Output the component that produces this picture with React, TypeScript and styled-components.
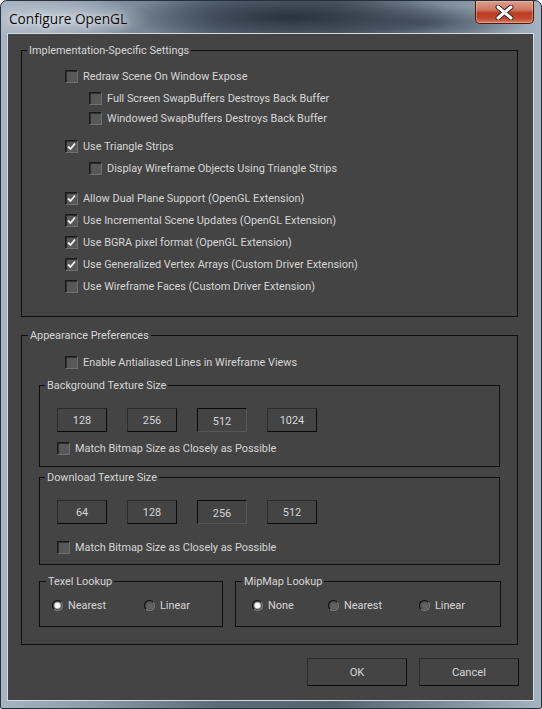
import React from "react";
import styled, { createGlobalStyle } from "styled-components";

const GlobalStyle = createGlobalStyle`
  html, body {
    margin: 0;
    padding: 0;
    background: #ffffff;
  }
  * {
    box-sizing: border-box;
  }
`;

const FONT = `Roboto, "Liberation Sans", Arial, sans-serif`;

const Window = styled.div`
  width: 542px;
  height: 709px;
  border: 1px solid #27313b;
  border-radius: 7px 7px 2px 2px;
  display: flex;
  flex-direction: column;
  background:
    radial-gradient(ellipse 90px 22px at 60px 18px, rgba(220, 228, 236, 0.55), rgba(220, 228, 236, 0) 100%),
    radial-gradient(ellipse 170px 26px at 290px 16px, rgba(38, 48, 60, 0.95), rgba(38, 48, 60, 0) 100%),
    radial-gradient(ellipse 110px 18px at 420px 22px, rgba(60, 72, 86, 0.8), rgba(60, 72, 86, 0) 100%),
    linear-gradient(90deg, #a7b4c1 0%, #8a98a6 18%, #5d6b79 40%, #56636f 62%, #7f8d9b 82%, #a5b2bf 100%);
  overflow: hidden;
`;

const TitleBar = styled.div`
  height: 32px;
  display: flex;
  justify-content: space-between;
  align-items: flex-start;
  padding-left: 8px;
  padding-right: 7px;
`;

const Title = styled.div`
  font-family: "Open Sans", "Noto Sans", sans-serif;
  font-size: 13.7px;
  color: #0d0d0d;
  margin-top: 8px;
  text-shadow: 0 0 6px rgba(255, 255, 255, 0.85), 0 0 10px rgba(255, 255, 255, 0.6);
`;

const CloseButton = styled.div`
  width: 59px;
  height: 23px;
  border: 1px solid #4b1a12;
  border-top: none;
  border-radius: 0 0 5px 5px;
  background: linear-gradient(180deg, #dc9e8e 0%, #cf7862 40%, #b93a22 55%, #c24a2e 80%, #d98068 100%);
  box-shadow: inset 0 0 0 1px rgba(255, 210, 190, 0.4);
  display: flex;
  align-items: center;
  justify-content: center;
`;

const ClientFrame = styled.div`
  margin-left: 6px;
  width: 527px;
  height: 668px;
  border: 1px solid #d3dce4;
`;

const Client = styled.div`
  width: 525px;
  height: 666px;
  background: #444444;
  padding: 16px 0 0 13px;
  font-family: ${FONT};
  font-size: 10.9px;
  color: #d6d6d6;
  display: flex;
  flex-direction: column;
`;

const Group = styled.div<{
  $w: number;
  $h: number;
  $mt?: number;
  $ml?: number;
  $pt?: number;
}>`
  position: relative;
  width: ${({ $w }) => $w}px;
  height: ${({ $h }) => $h}px;
  margin-top: ${({ $mt }) => $mt ?? 0}px;
  margin-left: ${({ $ml }) => $ml ?? 0}px;
  padding-top: ${({ $pt }) => $pt ?? 0}px;
  border: 1px solid #0e0e0e;
  display: flex;
  flex-direction: column;
  flex-shrink: 0;
`;

const Legend = styled.span<{ $l?: number }>`
  position: absolute;
  top: -7px;
  left: ${({ $l }) => $l ?? 5}px;
  padding: 0 2px;
  line-height: 14px;
  background: #444444;
  white-space: nowrap;
`;

const Row = styled.div<{ $indent: number; $mt?: number }>`
  display: flex;
  align-items: center;
  height: 20px;
  padding-left: ${({ $indent }) => $indent}px;
  margin-top: ${({ $mt }) => $mt ?? 0}px;
  white-space: nowrap;
`;

const Box = styled.span`
  width: 13px;
  height: 13px;
  flex-shrink: 0;
  border: 1px solid;
  border-color: #1a1a1a #6e6e6e #6e6e6e #1a1a1a;
  background: #585858;
  box-shadow: inset 1px 1px 0 #2e2e2e;
  display: flex;
  align-items: center;
  justify-content: center;
  margin-right: 5px;
`;

const Label = styled.span`
  line-height: 14px;
  padding-top: 2px;
`;

const Check = ({ checked, label, indent, mt }: { checked?: boolean; label: string; indent: number; mt?: number }) => (
  <Row $indent={indent} $mt={mt}>
    <Box>
      {checked && (
        <svg width="9" height="9" viewBox="0 0 9 9">
          <path d="M1 4.5 L3.5 7 L8 1.5" fill="none" stroke="#f2f2f2" strokeWidth="1.8" />
        </svg>
      )}
    </Box>
    <Label>{label}</Label>
  </Row>
);

const RadioRow = styled.div<{ $pl: number }>`
  display: flex;
  align-items: center;
  height: 20px;
  margin-top: 13px;
  padding-left: ${({ $pl }) => $pl}px;
`;

const RadioItem = styled.div<{ $w?: number }>`
  display: flex;
  align-items: center;
  width: ${({ $w }) => ($w ? `${$w}px` : "auto")};
  flex-shrink: 0;
`;

const RadioDot = styled.span<{ $on?: boolean }>`
  width: 11px;
  height: 11px;
  border-radius: 50%;
  flex-shrink: 0;
  margin-right: 5px;
  background: ${({ $on }) =>
    $on
      ? "radial-gradient(circle at 50% 50%, #f4f4f4 0 2.6px, #9a9a9a 3.2px, #555 4px)"
      : "radial-gradient(circle at 55% 55%, #606060 0 3px, #4c4c4c 4px)"};
  border: 1px solid;
  border-color: #0c0c0c #7a7a7a #7a7a7a #0c0c0c;
`;

const Radio = ({ on, label, w }: { on?: boolean; label: string; w?: number }) => (
  <RadioItem $w={w}>
    <RadioDot $on={on} />
    <Label>{label}</Label>
  </RadioItem>
);

const SizeRow = styled.div`
  display: flex;
  gap: 20px;
  padding-left: 17px;
`;

const SizeButton = styled.div<{ $down?: boolean }>`
  width: 50px;
  height: 24px;
  border: 1px solid;
  border-color: ${({ $down }) => ($down ? "#0a0a0a #585858 #585858 #0a0a0a" : "#2b2b2b #0a0a0a #0a0a0a #2b2b2b")};
  display: flex;
  align-items: center;
  justify-content: center;
  padding-top: ${({ $down }) => ($down ? 2 : 0)}px;
  color: #d6d6d6;
`;

const LookupRow = styled.div`
  display: flex;
  gap: 12px;
  margin-top: 16px;
  margin-left: 17px;
`;

const Footer = styled.div`
  display: flex;
  justify-content: flex-end;
  gap: 12px;
  margin-top: 13px;
  padding-right: 14px;
`;

const PushButton = styled.div`
  width: 100px;
  height: 28px;
  border: 1px solid;
  border-color: #2b2b2b #0a0a0a #0a0a0a #2b2b2b;
  display: flex;
  align-items: center;
  justify-content: center;
  font-size: 11.2px;
`;

const SizeButtons = ({ values, down }: { values: string[]; down: string }) => (
  <SizeRow>
    {values.map((v) => (
      <SizeButton key={v} $down={v === down}>
        {v}
      </SizeButton>
    ))}
  </SizeRow>
);

export default function App() {
  return (
    <>
      <GlobalStyle />
      <Window>
        <TitleBar>
          <Title>Configure OpenGL</Title>
          <CloseButton>
            <svg width="19" height="15" viewBox="0 0 19 15">
              <path d="M3 2 L16 13 M16 2 L3 13" stroke="#3b2a28" strokeWidth="5" strokeLinecap="round" />
              <path d="M3 2 L16 13 M16 2 L3 13" stroke="#ffffff" strokeWidth="3" strokeLinecap="round" />
            </svg>
          </CloseButton>
        </TitleBar>
        <ClientFrame>
          <Client>
            <Group $w={497} $h={267} $pt={15}>
              <Legend>Implementation-Specific Settings</Legend>
              <Check indent={43} label="Redraw Scene On Window Expose" />
              <Check indent={67} mt={2} label="Full Screen SwapBuffers Destroys Back Buffer" />
              <Check indent={67} label="Windowed SwapBuffers Destroys Back Buffer" />
              <Check indent={43} mt={8} checked label="Use Triangle Strips" />
              <Check indent={67} mt={2} label="Display Wireframe Objects Using Triangle Strips" />
              <Check indent={43} mt={10} checked label="Allow Dual Plane Support (OpenGL Extension)" />
              <Check indent={43} mt={2} checked label="Use Incremental Scene Updates (OpenGL Extension)" />
              <Check indent={43} mt={2} checked label="Use BGRA pixel format (OpenGL Extension)" />
              <Check indent={43} mt={2} checked label="Use Generalized Vertex Arrays (Custom Driver Extension)" />
              <Check indent={43} mt={2} label="Use Wireframe Faces (Custom Driver Extension)" />
            </Group>

            <Group $w={497} $h={310} $mt={18} $pt={16}>
              <Legend $l={6}>Appearance Preferences</Legend>
              <Check indent={43} label="Enable Antialiased Lines in Wireframe Views" />

              <Group $w={461} $h={82} $mt={13} $ml={17} $pt={22}>
                <Legend>Background Texture Size</Legend>
                <SizeButtons values={["128", "256", "512", "1024"]} down="512" />
                <Check indent={17} mt={6} label="Match Bitmap Size as Closely as Possible" />
              </Group>

              <Group $w={461} $h={88} $mt={10} $ml={17} $pt={22}>
                <Legend>Download Texture Size</Legend>
                <SizeButtons values={["64", "128", "256", "512"]} down="256" />
                <Check indent={17} mt={13} label="Match Bitmap Size as Closely as Possible" />
              </Group>

              <LookupRow>
                <Group $w={184} $h={46}>
                  <Legend $l={6}>Texel Lookup</Legend>
                  <RadioRow $pl={12}>
                    <Radio on w={92} label="Nearest" />
                    <Radio label="Linear" />
                  </RadioRow>
                </Group>
                <Group $w={266} $h={46}>
                  <Legend $l={6}>MipMap Lookup</Legend>
                  <RadioRow $pl={16}>
                    <Radio on w={76} label="None" />
                    <Radio w={91} label="Nearest" />
                    <Radio label="Linear" />
                  </RadioRow>
                </Group>
              </LookupRow>
            </Group>

            <Footer>
              <PushButton>OK</PushButton>
              <PushButton>Cancel</PushButton>
            </Footer>
          </Client>
        </ClientFrame>
      </Window>
    </>
  );
}
